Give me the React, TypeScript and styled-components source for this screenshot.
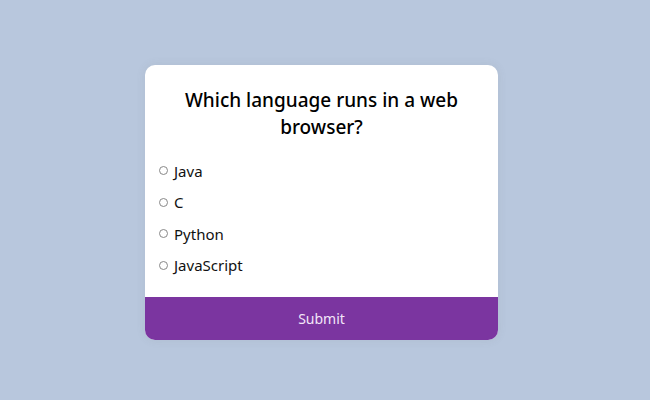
import React, { useState } from "react";
import styled, { createGlobalStyle } from "styled-components";

const GlobalStyle = createGlobalStyle`
  html, body {
    margin: 0;
    padding: 0;
    background-color: #b8c7dd;
    font-family: "Noto Sans", "Open Sans", sans-serif;
  }
`;

const questions = [
  {
    question: "Which language runs in a web browser?",
    options: ["Java", "C", "Python", "JavaScript"],
  },
];

export default function App() {
  const [current] = useState(0);
  const [answer, setAnswer] = useState("");
  const q = questions[current];

  return (
    <>
      <GlobalStyle />
      <Page>
        <Card>
          <Body>
            <Question>{q.question}</Question>
            <Options>
              {q.options.map((opt) => (
                <Option key={opt}>
                  <Radio
                    type="radio"
                    name="answer"
                    checked={answer === opt}
                    onChange={() => setAnswer(opt)}
                  />
                  {opt}
                </Option>
              ))}
            </Options>
          </Body>
          <SubmitButton>Submit</SubmitButton>
        </Card>
      </Page>
    </>
  );
}

const Page = styled.div`
  display: flex;
  align-items: center;
  justify-content: center;
  width: 100%;
  height: 400px;
`;

const Card = styled.div`
  width: 353px;
  margin: 5px 0 0 -7px;
  background-color: #ffffff;
  border-radius: 10px;
  overflow: hidden;
  box-shadow: 0 0 10px rgba(100, 100, 100, 0.1);
`;

const Body = styled.div`
  padding: 22px 28px 16px 14px;
`;

const Question = styled.h2`
  margin: 0 0 14px 14px;
  font-size: 19px;
  font-weight: 500;
  line-height: 27px;
  text-align: center;
  color: #000;
`;

const Options = styled.ul`
  list-style: none;
  margin: 0;
  padding: 0;
`;

const Option = styled.li`
  display: flex;
  align-items: center;
  gap: 6px;
  height: 31.5px;
  font-size: 15px;
  color: #111;
`;

const Radio = styled.input`
  appearance: none;
  width: 9px;
  height: 9px;
  margin: 0;
  border: 1px solid #888;
  border-radius: 50%;
  background: #fff;
  cursor: pointer;

  &:checked {
    background: #8e44ad;
    border-color: #8e44ad;
  }
`;

const SubmitButton = styled.button`
  display: block;
  width: 100%;
  height: 43px;
  border: none;
  background-color: #7b35a0;
  color: #f2e6f8;
  font-family: inherit;
  font-size: 14px;
  cursor: pointer;

  &:hover {
    background-color: #6a2c8a;
  }
`;
